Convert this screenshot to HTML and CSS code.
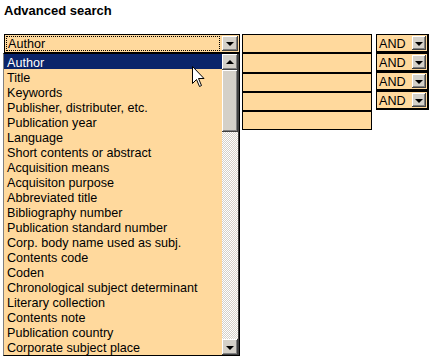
FILE: index.html
```html
<!DOCTYPE html>
<html>
<head>
<meta charset="utf-8">
<title>Advanced search</title>
<link rel="stylesheet" href="styles.css">
</head>
<body>
<h1 class="title">Advanced search</h1>
<div class="form">
  <div class="field-col">
    <div class="select main">
      <span class="sel-text"><span class="focus">Author</span></span>
      <span class="btn"><i class="arr down"></i></span>
    </div>
    <div class="listbox">
      <ul class="options">
        <li class="selected">Author</li>
        <li>Title</li>
        <li>Keywords</li>
        <li>Publisher, distributer, etc.</li>
        <li>Publication year</li>
        <li>Language</li>
        <li>Short contents or abstract</li>
        <li>Acquisition means</li>
        <li>Acquisiton purpose</li>
        <li>Abbreviated title</li>
        <li>Bibliography number</li>
        <li>Publication standard number</li>
        <li>Corp. body name used as subj.</li>
        <li>Contents code</li>
        <li>Coden</li>
        <li>Chronological subject determinant</li>
        <li>Literary collection</li>
        <li>Contents note</li>
        <li>Publication country</li>
        <li>Corporate subject place</li>
      </ul>
      <div class="scrollbar">
        <span class="btn sb-btn"><i class="arr up"></i></span>
        <span class="thumb"></span>
        <span class="track"></span>
        <span class="btn sb-btn"><i class="arr down"></i></span>
      </div>
      <svg class="cursor" width="13" height="22" viewBox="0 0 13 22">
        <path d="M0.5 0.5 L0.5 17.5 L4.5 13.5 L7.5 20.5 L9.5 19.5 L6.5 12.5 L12 12.5 Z" fill="#fff" stroke="#000" stroke-width="1"/>
      </svg>
    </div>
  </div>
  <div class="inputs-col">
    <div class="text-input"></div>
    <div class="text-input"></div>
    <div class="text-input"></div>
    <div class="text-input"></div>
    <div class="text-input"></div>
  </div>
  <div class="op-col">
    <div class="select op"><span class="sel-text">AND</span><span class="btn"><i class="arr down"></i></span></div>
    <div class="select op"><span class="sel-text">AND</span><span class="btn"><i class="arr down"></i></span></div>
    <div class="select op"><span class="sel-text">AND</span><span class="btn"><i class="arr down"></i></span></div>
    <div class="select op"><span class="sel-text">AND</span><span class="btn"><i class="arr down"></i></span></div>
  </div>
</div>
</body>
</html>
```
FILE: styles.css
```css
html, body {
  margin: 0;
  padding: 0;
  background: #fff;
}
body {
  font-family: "Liberation Sans", Arial, sans-serif;
  color: #000;
}
.title {
  margin: 0;
  padding: 3px 4px 0;
  font-size: 13px;
  line-height: 16px;
  font-weight: bold;
}
.form {
  display: flex;
  align-items: flex-start;
  margin-top: 15px;
  padding-left: 4px;
}
.field-col {
  width: 236px;
  display: flex;
  flex-direction: column;
}
.inputs-col {
  margin-left: 2px;
  width: 130px;
  display: flex;
  flex-direction: column;
}
.op-col {
  margin-left: 4px;
  width: 53px;
  display: flex;
  flex-direction: column;
}
.select {
  position: relative;
  box-sizing: border-box;
  height: 19px;
  background: #ffd99d;
  border: 1px solid #000;
  display: flex;
  align-items: stretch;
  font-size: 12.6px;
}
.sel-text {
  flex: 1;
  display: flex;
  align-items: center;
  padding: 1px;
}
.focus {
  flex: 1;
  box-sizing: border-box;
  height: 15px;
  line-height: 15px;
  padding: 1px 0 0 2px;
  outline: 1px dotted #000;
  outline-offset: -1px;
}
.btn {
  position: relative;
  box-sizing: border-box;
  width: 16px;
  background: #d4d0c8;
  box-shadow: inset -1px -1px #404040, inset 1px 1px #fff, inset -2px -2px #808080;
  display: flex;
  align-items: center;
  justify-content: center;
}
.select .btn {
  margin: 1px;
}
.arr {
  display: block;
  width: 0;
  height: 0;
  border-left: 4px solid transparent;
  border-right: 4px solid transparent;
}
.arr.down {
  border-top: 4px solid #000;
  margin-top: 1px;
}
.arr.up {
  border-bottom: 4px solid #000;
  margin-top: -1px;
}
.op {
  border-right-width: 2px;
  border-bottom-width: 2px;
}
.op .sel-text {
  padding: 3px 0 0 2px;
  line-height: 15px;
}
.op .btn {
  width: 14px;
}
.text-input {
  box-sizing: border-box;
  height: 19.3px;
  background: #ffd99d;
  border: 1px solid #000;
}
.listbox {
  position: relative;
  margin-left: -1px;
  width: 237px;
  box-sizing: border-box;
  height: 303px;
  border: 1px solid #000;
  border-left-color: #808080;
  background: #ffd99d;
  display: flex;
  font-size: 12.6px;
}
.options {
  list-style: none;
  margin: 0;
  padding: 0;
  flex: 1;
}
.options li {
  box-sizing: border-box;
  height: 15px;
  line-height: 15px;
  padding: 2px 0 0 3px;
  white-space: nowrap;
}
.options li.selected {
  background: #0a246a;
  color: #fff;
}
.scrollbar {
  width: 16px;
  display: flex;
  flex-direction: column;
  border-right: 1px solid #404040;
}
.sb-btn {
  height: 16px;
  flex: none;
}
.thumb {
  height: 62px;
  flex: none;
  background: #d4d0c8;
  box-shadow: inset -1px -1px #404040, inset 1px 1px #fff, inset -2px -2px #808080;
}
.track {
  flex: 1;
  background-color: #fff;
  background-image: conic-gradient(#d4d0c8 25%, #fff 0 50%, #d4d0c8 0 75%, #fff 0);
  background-size: 2px 2px;
}
.cursor {
  position: absolute;
  left: 188px;
  top: 12px;
}
```
